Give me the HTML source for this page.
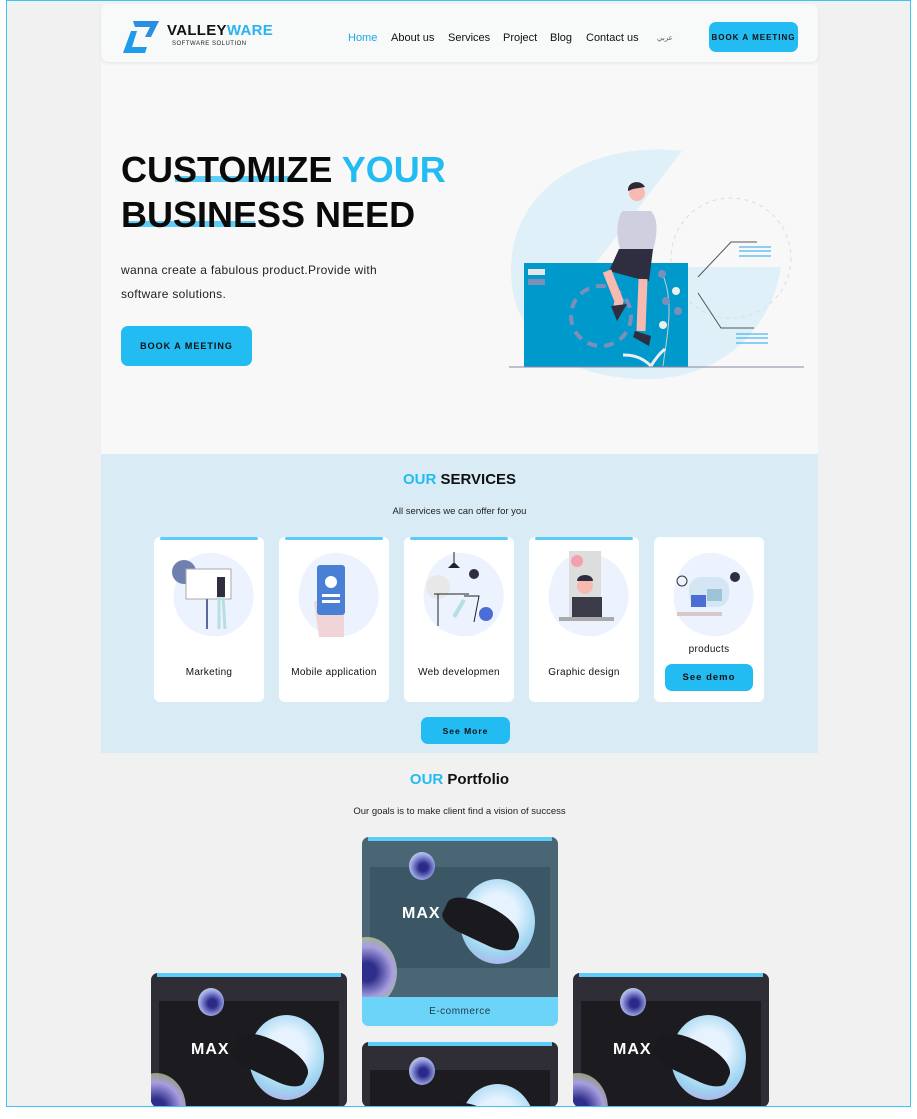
<!DOCTYPE html>
<html style="overflow:hidden"><head><meta charset="utf-8"><style>
*{margin:0;padding:0;box-sizing:border-box}
html,body{width:917px;height:1119px;overflow:hidden}
body{background:#fff;font-family:"Liberation Sans",sans-serif;position:relative}
.abs{position:absolute}
#frame{left:6px;top:0;width:905px;height:1107px;border:1.5px solid #3ec3f5;background:#f1f1f1;overflow:hidden}
.nav a{position:absolute;top:31px;font-size:11px;color:#111}
.btn{background:#22bbf2;border-radius:7px;color:#111;font-weight:bold;display:flex;align-items:center;justify-content:center;letter-spacing:1px}
.card{position:absolute;top:536px;width:110px;height:165px;background:#fff;border-radius:6px}
.card .bar{position:absolute;left:6px;right:6px;top:0;height:3px;background:#5dcdf8;border-radius:2px}
.card .blob{position:absolute;left:20px;top:17px;width:80px;height:82px;background:#edf3fe;border-radius:45% 55% 50% 50%;transform:rotate(15deg)}
.card .lbl{position:absolute;left:0;right:0;top:130px;text-align:center;font-size:10px;color:#111;letter-spacing:.3px}
.pc{position:absolute;width:196px;border-radius:7px;overflow:hidden;background:#2f2e36}
.pc .tb{position:absolute;left:6px;right:6px;top:0;height:4px;background:#5dcdf8}
.pc .in{position:absolute;left:8px;right:8px;top:28px;height:105px;background:#1c1c20}
.pc .orb{position:absolute;left:47px;top:15px;width:26px;height:28px;border-radius:50%;background:radial-gradient(circle at 55% 55%,#2b2a8a 20%,#9fa8e8 60%,#d8f0c0 90%)}
.pc .big{position:absolute;left:98px;top:42px;width:75px;height:85px;border-radius:50%;background:radial-gradient(circle at 50% 40%,#e6f3ff 30%,#9dd4f0 65%,#b9a6ea 90%)}
.pc .shoe{position:absolute;left:80px;top:68px;width:80px;height:36px;border-radius:40% 50% 30% 30%;background:#1a1a1e;transform:rotate(25deg)}
.pc .max{position:absolute;left:40px;top:68px;color:#fff;font-weight:bold;font-size:16px;letter-spacing:1px}
.pc .blur{position:absolute;left:-25px;top:100px;width:60px;height:70px;border-radius:50%;background:radial-gradient(circle,#2e2f8a 20%,#a79ee0 55%,rgba(230,240,180,.6) 75%,transparent 85%)}
</style></head><body>
<div id="frame" class="abs">
  <div class="abs" style="left:94px;top:60px;width:717px;height:393px;background:#f8f8f8"></div>
  <div class="abs" style="left:94px;top:3px;width:717px;height:58px;background:#f8f9f9;border-radius:7px;box-shadow:0 2px 3px rgba(0,0,0,.06)"></div>
  <svg class="abs" style="left:114px;top:18px" width="40" height="36" viewBox="0 0 40 36">
    <path d="M12 2 L38 2 L30 18 L24 18 L29 8 L14 8 Z" fill="#2a8fe0"/>
    <path d="M10 12 L16 12 L11 28 L26 28 L24 34 L2 34 Z" fill="#1e9bea"/>
  </svg>
  <div class="abs" style="left:160px;top:21px;font-size:15px;font-weight:bold;letter-spacing:.3px;color:#111">VALLEY<span style="color:#2bb3ef">WARE</span></div>
  <div class="abs" style="left:165px;top:40px;font-size:6px;color:#222;letter-spacing:.5px">SOFTWARE SOLUTION</div>
  <div class="nav">
    <a style="left:341px;color:#1ea8e6">Home</a><a style="left:384px">About us</a><a style="left:441px">Services</a><a style="left:496px">Project</a><a style="left:543px">Blog</a><a style="left:579px">Contact us</a><a style="left:650px;font-size:7px;top:33px;color:#555">عربي</a>
  </div>
  <div class="abs btn" style="left:702px;top:21px;width:89px;height:30px;font-size:8px">BOOK A MEETING</div>

  <div class="abs" style="left:168px;top:175px;width:120px;height:6px;background:#5dcdf8"></div>
  <div class="abs" style="left:118px;top:220px;width:130px;height:6px;background:#5dcdf8"></div>
  <div class="abs" style="left:114px;top:146px;font-size:36px;font-weight:bold;line-height:45px;color:#0a0a0a">CUSTOMIZE <span style="color:#22bbf2">YOUR</span><br>BUSINESS NEED</div>
  <div class="abs" style="left:114px;top:257px;font-size:12px;line-height:24px;color:#222;letter-spacing:.3px">wanna create a fabulous product.Provide with<br>software solutions.</div>
  <div class="abs btn" style="left:114px;top:325px;width:131px;height:40px;font-size:9px">BOOK A MEETING</div>
  <svg class="abs" style="left:494px;top:140px" width="310" height="250" viewBox="0 0 310 250">
    <path d="M181 10 C100 0 10 40 10 130 C10 200 70 240 150 238 C220 236 270 190 280 126 L92 126 Z" fill="#dff0f8"/>
    <circle cx="230" cy="117" r="60" fill="none" stroke="#ddd" stroke-dasharray="4 4"/>
    <rect x="23" y="122" width="164" height="104" fill="#0099cc"/>
    <rect x="27" y="128" width="17" height="6" fill="#e6e6e6"/><rect x="27" y="138" width="17" height="6" fill="#7c8fb8"/>
    <circle cx="100" cy="175" r="30" fill="none" stroke="#7c8fb8" stroke-width="4" stroke-dasharray="10 7"/>
    <path d="M160 130 C175 160 165 200 162 225" stroke="#ccc" fill="none"/>
    <circle cx="161" cy="133" r="4" fill="#7c8fb8"/><circle cx="175" cy="150" r="4" fill="#eee"/><circle cx="165" cy="160" r="4" fill="#7c8fb8"/><circle cx="177" cy="170" r="4" fill="#7c8fb8"/><circle cx="162" cy="184" r="4" fill="#eee"/>
    <path d="M197 136 L230 101 L256 101 M197 152 L220 187 L253 187" stroke="#555" fill="none"/>
    <path d="M238 106h32M238 110h32M238 115h32M235 193h32M235 197h32M235 202h32" stroke="#22a6f0"/>
    <line x1="8" y1="226" x2="303" y2="226" stroke="#8888a0"/>
    <path d="M122 70 C115 75 115 100 120 110 L152 110 C156 95 158 78 150 70 Z" fill="#d0cfe0"/>
    <circle cx="136" cy="52" r="8" fill="#f7b9b0"/><path d="M127 50 C126 40 140 38 144 46 L132 48Z" fill="#2a2a33"/>
    <path d="M108 130 L118 108 L152 108 L148 140 L138 138 Z" fill="#2f2e41"/>
    <path d="M106 130 L118 160 L116 170" stroke="#f7b9b0" stroke-width="9" fill="none"/>
    <path d="M142 138 L140 190" stroke="#f7b9b0" stroke-width="9" fill="none"/>
    <path d="M110 165 L126 163 L116 180 Z" fill="#2f2e41"/><path d="M134 190 L150 195 L148 205 L132 196 Z" fill="#2f2e41"/>
    <path d="M150 225 C140 215 130 214 122 214 M150 225 C158 212 162 210 164 208" stroke="#eee" stroke-width="3" fill="none"/>
  </svg>

  <div class="abs" style="left:94px;top:453px;width:717px;height:299px;background:#d9ecf5"></div>
  <div class="abs" style="left:94px;top:470px;width:717px;text-align:center;font-size:15px;font-weight:bold;color:#111"><span style="color:#22bbf2">OUR</span> SERVICES</div>
  <div class="abs" style="left:94px;top:505px;width:717px;text-align:center;font-size:9.5px;color:#222">All services we can offer for you</div>
  <div class="card" style="left:147px"><div class="bar"></div><div class="blob"></div>
    <svg class="abs" style="left:15px;top:20px" width="80" height="80"><circle cx="15" cy="15" r="12" fill="#6f80b0"/><rect x="17" y="12" width="45" height="30" fill="#fff" stroke="#aaa"/><line x1="38" y1="42" x2="38" y2="72" stroke="#5a6aa0" stroke-width="2"/><rect x="48" y="20" width="8" height="20" fill="#2f2e41"/><path d="M50 40 L50 72 M54 40 L56 72" stroke="#b6dfe0" stroke-width="3"/></svg>
    <div class="lbl">Marketing</div></div>
  <div class="card" style="left:272px"><div class="bar"></div><div class="blob"></div>
    <svg class="abs" style="left:30px;top:25px" width="50" height="75"><path d="M5 40 L25 30 L35 50 L35 75 L10 75 Z" fill="#f0d4d8"/><rect x="8" y="3" width="28" height="50" rx="3" fill="#4a7fd6"/><circle cx="22" cy="20" r="6" fill="#fff"/><rect x="13" y="32" width="18" height="3" fill="#fff"/><rect x="13" y="38" width="18" height="3" fill="#fff"/></svg>
    <div class="lbl">Mobile application</div></div>
  <div class="card" style="left:397px"><div class="bar"></div><div class="blob"></div>
    <svg class="abs" style="left:20px;top:15px" width="80" height="80"><line x1="30" y1="0" x2="30" y2="10" stroke="#222"/><path d="M24 16 L30 10 L36 16Z" fill="#222"/><circle cx="14" cy="35" r="12" fill="#e8e8e8"/><circle cx="62" cy="62" r="7" fill="#4a6ed6"/><path d="M10 42 L45 42 M14 42 L14 74 M40 44 L55 44 L50 70" stroke="#222" fill="none"/><path d="M40 48 L30 65" stroke="#b6dfe0" stroke-width="4"/><circle cx="50" cy="22" r="5" fill="#2f2e41"/></svg>
    <div class="lbl">Web developmen</div></div>
  <div class="card" style="left:522px"><div class="bar"></div><div class="blob"></div>
    <svg class="abs" style="left:15px;top:14px" width="80" height="80"><rect x="25" y="0" width="32" height="70" fill="#ddd"/><circle cx="33" cy="10" r="6" fill="#f2a0b0"/><circle cx="41" cy="35" r="8" fill="#f7b9b0"/><path d="M33 30 C33 22 49 22 49 30Z" fill="#2f2e41"/><rect x="28" y="46" width="30" height="22" fill="#3a3a48"/><rect x="15" y="66" width="55" height="4" fill="#aaa"/></svg>
    <div class="lbl">Graphic design</div></div>
  <div class="card" style="left:647px"><div class="blob"></div>
    <svg class="abs" style="left:15px;top:30px" width="80" height="60"><rect x="20" y="10" width="40" height="30" rx="12" fill="#c9dfee" opacity=".7"/><circle cx="13" cy="14" r="5" fill="none" stroke="#333"/><circle cx="66" cy="10" r="5" fill="#2f2e41"/><rect x="22" y="28" width="15" height="12" fill="#4a6ed6"/><rect x="38" y="22" width="15" height="12" fill="#9cc3d6"/><rect x="8" y="45" width="45" height="4" fill="#d8c8c8"/></svg>
    <div class="lbl" style="top:107px">products</div>
    <div class="abs btn" style="left:11px;top:127px;width:88px;height:27px;font-size:9.5px;font-weight:bold">See demo</div></div>
  <div class="abs btn" style="left:414px;top:716px;width:89px;height:27px;font-size:8.5px">See More</div>

  <div class="abs" style="left:94px;top:770px;width:717px;text-align:center;font-size:15px;font-weight:bold;color:#111"><span style="color:#22bbf2">OUR</span> Portfolio</div>
  <div class="abs" style="left:94px;top:805px;width:717px;text-align:center;font-size:9.5px;color:#222">Our goals is to make client find a vision of success</div>

  <div class="pc" style="left:355px;top:836px;height:189px;background:#4a6573"><div class="in" style="background:#3b5664;top:30px;height:101px"></div><div class="orb"></div><div class="big"></div><div class="shoe"></div><div class="max">MAX</div><div class="blur"></div><div class="tb"></div>
    <div class="abs" style="left:0;right:0;top:160px;height:29px;background:#6dd4f9;text-align:center;font-size:10px;line-height:29px;color:#1a3a4a;letter-spacing:.5px">E-commerce</div></div>
  <div class="pc" style="left:144px;top:972px;height:134px"><div class="in"></div><div class="orb"></div><div class="big"></div><div class="shoe"></div><div class="max">MAX</div><div class="blur"></div><div class="tb"></div></div>
  <div class="pc" style="left:566px;top:972px;height:134px"><div class="in"></div><div class="orb"></div><div class="big"></div><div class="shoe"></div><div class="max">MAX</div><div class="blur"></div><div class="tb"></div></div>
  <div class="pc" style="left:355px;top:1041px;height:65px"><div class="in"></div><div class="orb"></div><div class="big"></div><div class="shoe"></div><div class="tb"></div></div>
</div>
</body></html>
